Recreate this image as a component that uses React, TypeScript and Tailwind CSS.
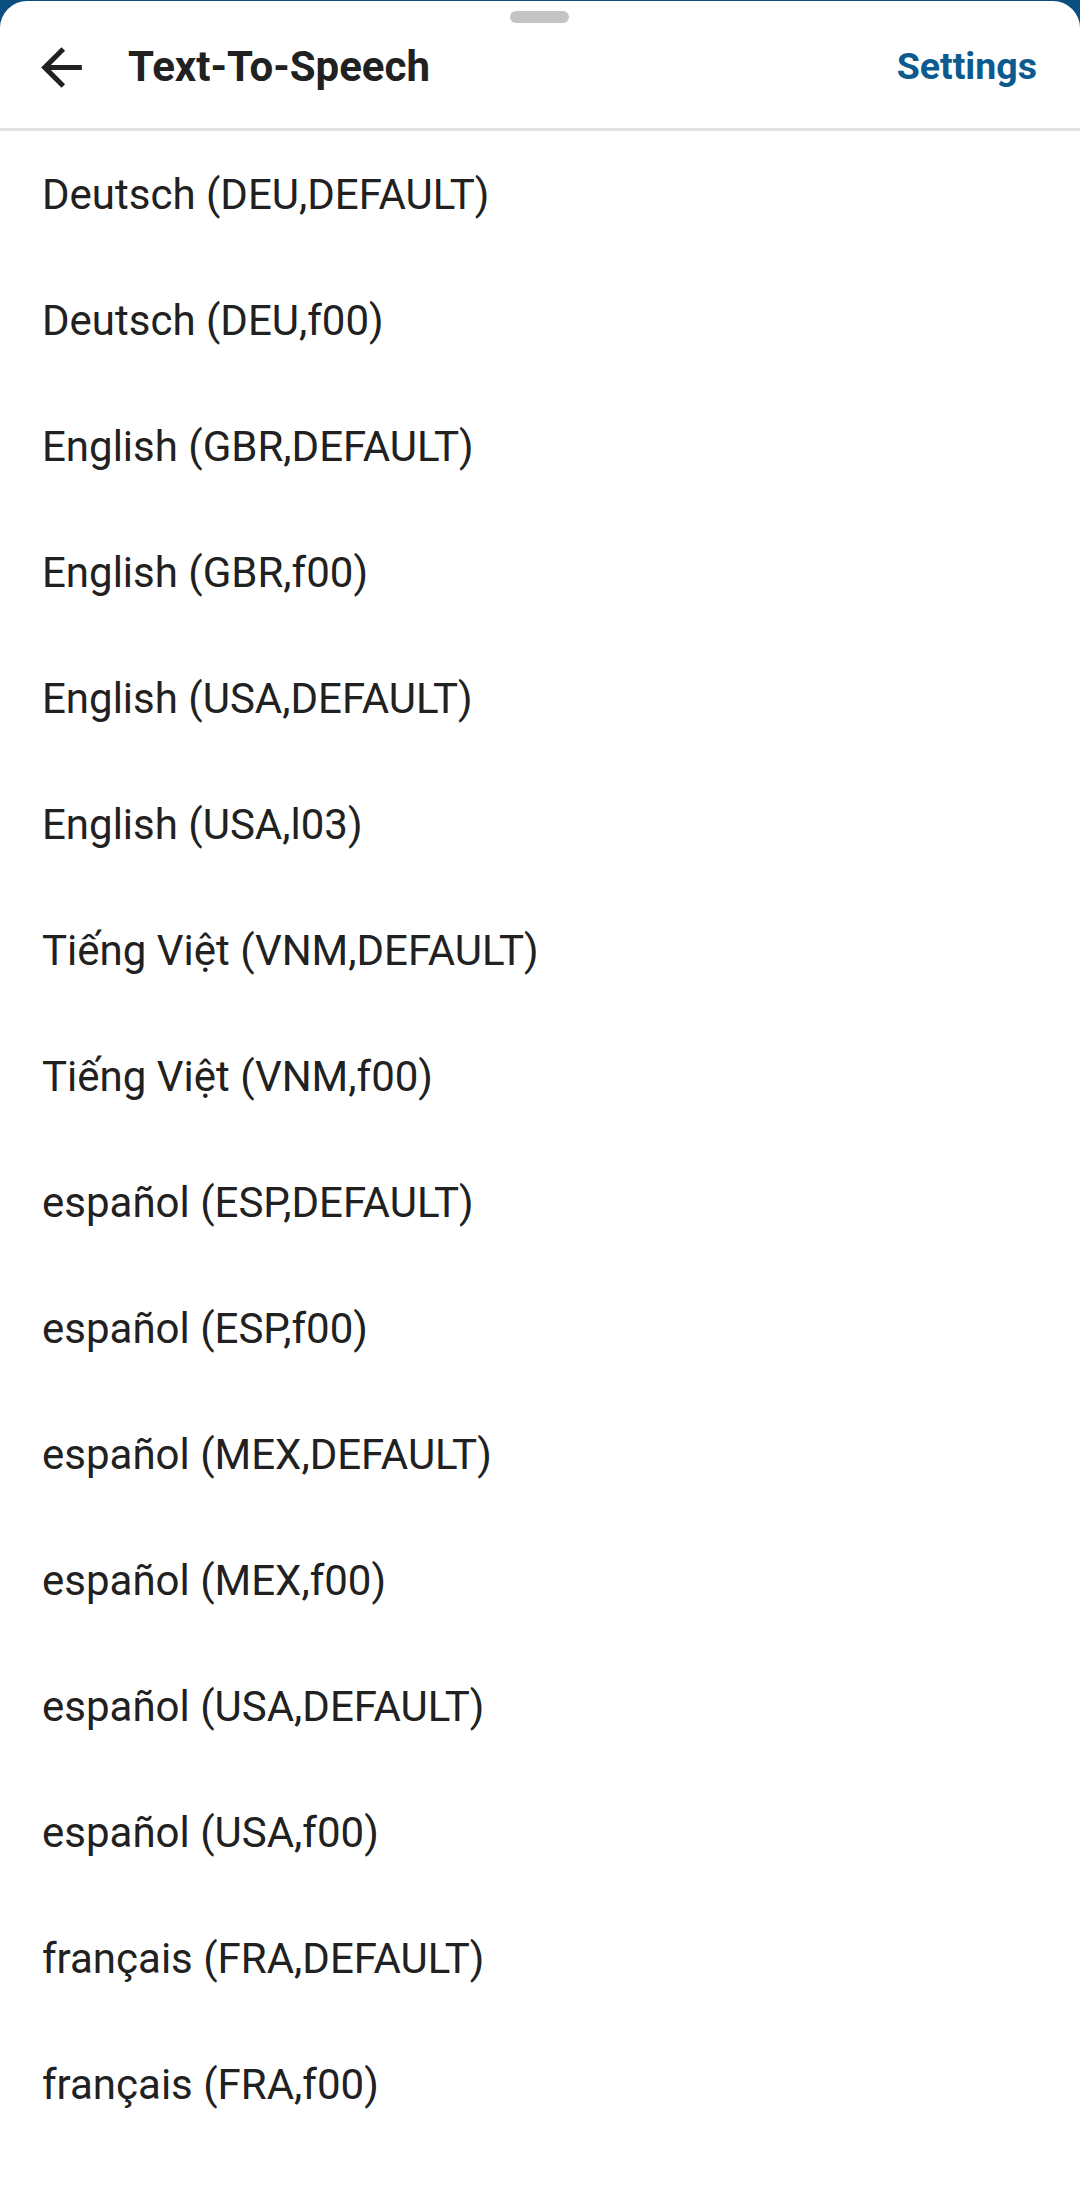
const VOICES = [
  "Deutsch (DEU,DEFAULT)",
  "Deutsch (DEU,f00)",
  "English (GBR,DEFAULT)",
  "English (GBR,f00)",
  "English (USA,DEFAULT)",
  "English (USA,l03)",
  "Tiếng Việt (VNM,DEFAULT)",
  "Tiếng Việt (VNM,f00)",
  "español (ESP,DEFAULT)",
  "español (ESP,f00)",
  "español (MEX,DEFAULT)",
  "español (MEX,f00)",
  "español (USA,DEFAULT)",
  "español (USA,f00)",
  "français (FRA,DEFAULT)",
  "français (FRA,f00)",
];

function BackArrow() {
  // material arrow_back
  return (
    <svg width="61" height="61" viewBox="0 0 24 24" fill="#212121">
      <path d="M20 11H7.83l5.59-5.59L12 4l-8 8 8 8 1.41-1.41L7.83 13H20v-2z" />
    </svg>
  );
}

export default function App() {
  return (
    <div className="min-h-[2187px] w-[1080px] bg-[#0b4f80] pt-[1px] font-['Roboto','Noto_Sans',sans-serif] text-[#212121]">
      <div className="relative min-h-[2186px] rounded-t-[27px] bg-white">
        <div className="absolute left-[510px] top-[10px] h-[12px] w-[59px] rounded-full bg-[#c4c4c4]" />

        <header className="flex h-[130px] items-center border-b-[3px] border-[#e1e1e1] pt-[5px] pl-[31px] pr-[43px]">
          <button className="flex h-[61px] w-[61px] items-center justify-center">
            <BackArrow />
          </button>
          <h1 className="ml-[36px] text-[42px] font-bold leading-none">
            Text-To-Speech
          </h1>
          <button className="ml-auto text-[37.5px] font-bold leading-none text-[#0d5a8f]">
            Settings
          </button>
        </header>

        <ul>
          {VOICES.map((v) => (
            <li
              key={v}
              className="flex h-[126px] items-center pl-[42px] text-[42px]"
            >
              {v}
            </li>
          ))}
        </ul>
      </div>
    </div>
  );
}
